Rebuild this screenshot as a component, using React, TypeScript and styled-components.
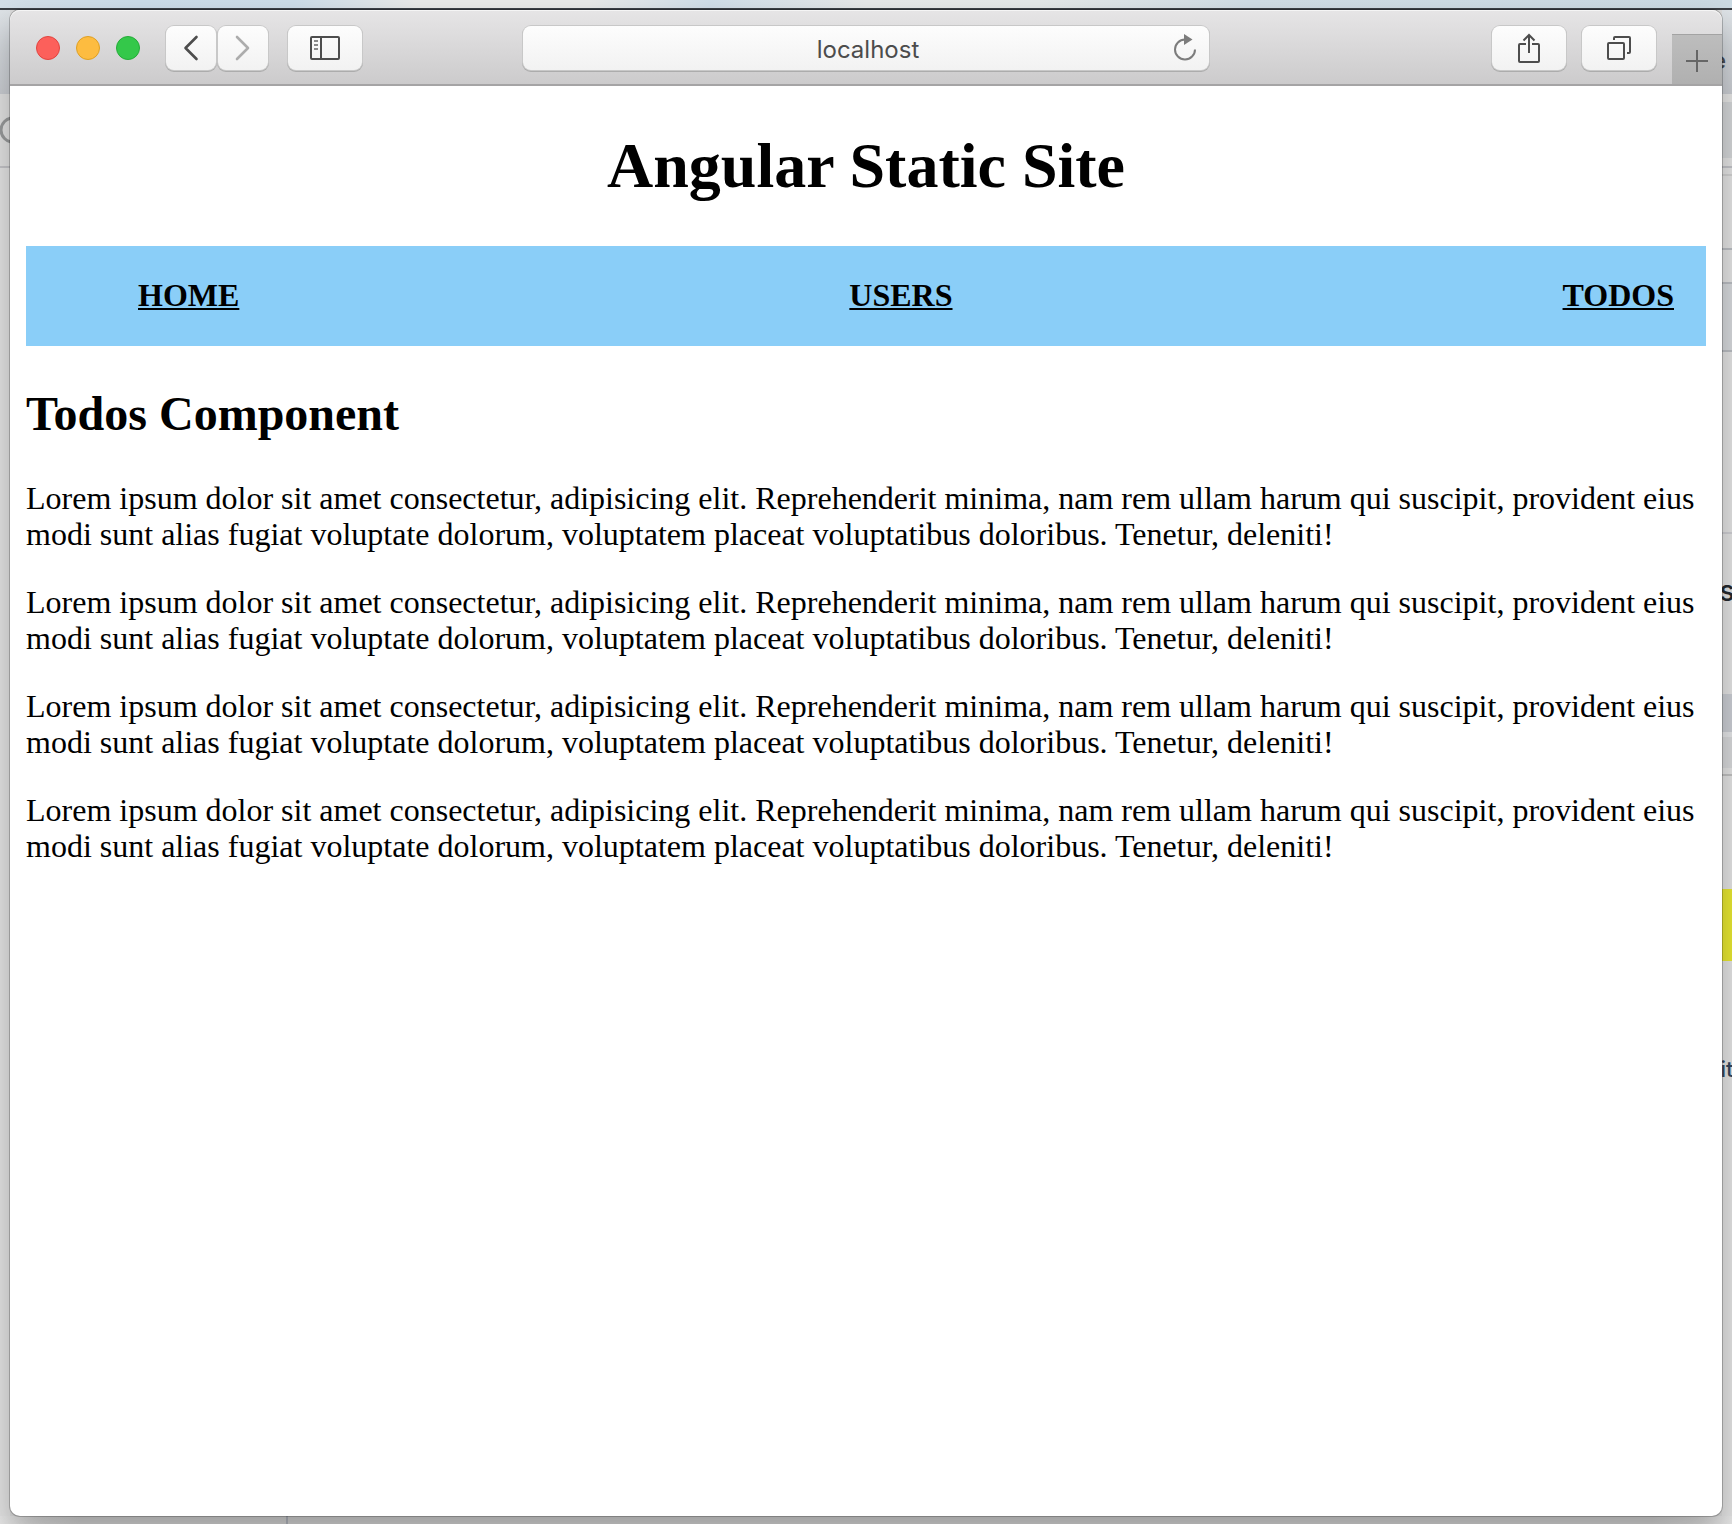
import React from "react";
import styled, { createGlobalStyle } from "styled-components";

const sans = `Inter, Roboto, "Liberation Sans", sans-serif`;
const serif = `"Liberation Serif", "Times New Roman", serif`;

const GlobalStyle = createGlobalStyle`
  * { box-sizing: border-box; }
  body { margin: 0; background: #dadada; font-family: ${serif}; }
`;

const Desktop = styled.div`
  min-height: 100vh;
  display: grid;
  grid-template-columns: 10px minmax(0, 1fr) 10px;
  grid-template-rows: 10px 1fr 8px;
  overflow: hidden;
`;

const MenuBar = styled.div`
  grid-column: 1 / -1;
  height: 10px;
  border-bottom: 2px solid #3a3f45;
  background: linear-gradient(90deg, #d3dfe8 0%, #cbdce8 8%, #cddde8 17%, #e8e9e8 24%, #e8e9e8 34%, #d0dee8 41%, #e6e8e9 50%, #e4e8e8 60%, #d0dde5 72%, #cbdae3 100%);
`;

const Strip = styled.div`
  min-width: 0;
  overflow: hidden;
  display: flex;
  flex-direction: column;
`;

const BottomStrip = styled.div`
  grid-column: 1 / -1;
  padding-left: 286px;
  background: linear-gradient(90deg, #e6e6e6, #d2d2d2 80px, #d2d2d2 calc(100% - 80px), #e6e6e6);
`;

const Divider = styled.div`
  width: 2px;
  height: 8px;
  background: #b0b3bb;
`;

const Band = styled.div<{ $h?: number; $bg?: string; $line?: string; $end?: boolean }>`
  flex: ${(p) => (p.$h ? `0 0 ${p.$h}px` : "1 0 0")};
  background: ${(p) => p.$bg ?? "#e2e2e2"};
  border-bottom: ${(p) => (p.$line ? `2px solid ${p.$line}` : "none")};
  padding: ${(p) => (p.$end ? "18px 6px 0 0" : 0)};
  display: flex;
  align-items: center;
  justify-content: ${(p) => (p.$end ? "flex-end" : "center")};
  overflow: hidden;
`;

const Fragment = styled.span<{ $size: number; $color: string }>`
  flex: none;
  font: 500 ${(p) => p.$size}px/32px ${sans};
  color: ${(p) => p.$color};
`;

const Window = styled.main`
  z-index: 1;
  display: flex;
  flex-direction: column;
  min-width: 0;
  background: #fff;
  border-radius: 10px;
  box-shadow: 0 0 0 1px rgba(0, 0, 0, 0.22), 0 16px 32px rgba(0, 0, 0, 0.26);
`;

const Toolbar = styled.header`
  display: grid;
  grid-template-columns: 1fr minmax(0, 688px) 1fr;
  align-items: start;
  height: 76px;
  border-bottom: 2px solid #a5a4a5;
  border-radius: 10px 10px 0 0;
  background: linear-gradient(#e6e5e6, #cccbcc);
  box-shadow: inset 0 1px #f5f5f5;
`;

const Group = styled.div<{ $end?: boolean }>`
  display: flex;
  align-items: flex-start;
  justify-content: ${(p) => (p.$end ? "flex-end" : "flex-start")};
  padding-left: ${(p) => (p.$end ? 0 : 26)}px;
`;

const Lights = styled.div`
  display: flex;
  gap: 16px;
  margin: 26px 26px 0 0;
`;

const Light = styled.button<{ $fill: string; $edge: string }>`
  width: 24px;
  height: 24px;
  padding: 0;
  border: 1px solid ${(p) => p.$edge};
  border-radius: 50%;
  background: ${(p) => p.$fill};
`;

const ToolButton = styled.button<{ $wide?: boolean; $gap: number }>`
  display: flex;
  align-items: center;
  justify-content: center;
  width: ${(p) => (p.$wide ? 74 : 50)}px;
  height: 44px;
  margin: 16px ${(p) => p.$gap}px 0 0;
  padding: 0;
  border: 0;
  border-radius: 8px;
  background: linear-gradient(#fdfdfd, #f2f2f2);
  box-shadow: 0 0 0 1px #c8c8c8, 0 1px 0 1px #acacac;
`;

const AddressBar = styled.form`
  display: flex;
  align-items: center;
  height: 44px;
  margin: 16px 1px 0;
  padding: 0 12px 0 42px;
  border-radius: 8px;
  background: linear-gradient(#fdfdfd, #f2f2f2);
  box-shadow: 0 0 0 1px #c8c8c8, 0 1px 0 1px #acacac;
`;

const Address = styled.input`
  flex: 1;
  min-width: 0;
  height: 44px;
  padding: 2px 0 0;
  border: 0;
  background: none;
  color: #4c4c4c;
  font: 400 24px/40px ${sans};
  text-align: center;
`;

const Reload = styled.button`
  display: flex;
  padding: 0 0 2px;
  border: 0;
  background: none;
`;

const NewTab = styled.button`
  display: flex;
  align-items: center;
  justify-content: center;
  width: 50px;
  height: 50px;
  margin-top: 24px;
  padding: 2px 0 0;
  border: 0;
  border-top: 1px solid #a3a3a3;
  background: linear-gradient(#bdbdbd, #b0b0b0);
`;

const Page = styled.article`
  padding: 0 16px;
  color: #000;
  font-size: 32px;
  line-height: 36px;
`;

const Title = styled.h1`
  margin: 43px 0;
  font-size: 64px;
  line-height: 74px;
  text-align: center;
`;

const Nav = styled.nav`
  background: #8acef8;
`;

const NavList = styled.ul`
  display: flex;
  justify-content: space-between;
  margin: 0;
  padding: 31px 32px 33px 112px;
  list-style: none;
`;

const NavLink = styled.a`
  color: #000;
  font-weight: 700;
  text-decoration: underline;
  text-decoration-thickness: 2px;
  text-underline-offset: 2px;
  text-decoration-skip-ink: none;
`;

const Heading = styled.h2`
  margin: 41px 0 39px;
  font-size: 48px;
  line-height: 54px;
`;

const Paragraph = styled.p`
  margin: 0 0 32px;
`;

const lorem =
  "Lorem ipsum dolor sit amet consectetur, adipisicing elit. Reprehenderit minima, nam rem ullam harum qui suscipit, provident eius modi sunt alias fugiat voluptate dolorum, voluptatem placeat voluptatibus doloribus. Tenetur, deleniti!";

function Chevron({ back }: { back?: boolean }) {
  return (
    <svg width="16" height="26" viewBox="0 0 16 26" fill="none" stroke={back ? "#4d4d4d" : "#acacac"} strokeWidth="2.6" strokeLinecap="round" strokeLinejoin="round">
      <path d={back ? "M13.500 2 L2.500 13 L13.500 24" : "M2 2 L13 13 L2 24"} />
    </svg>
  );
}

function SidebarIcon() {
  return (
    <svg width="30" height="24" viewBox="0 0 30 24" fill="none" stroke="#4d4d4d" strokeWidth="2">
      <rect x="1" y="1" width="28" height="22" rx="1" />
      <path d="M11 1V23" />
      <path d="M4 5H8M4 9H8M4 13H8" stroke="#8a8a8a" />
    </svg>
  );
}

function ReloadIcon() {
  return (
    <svg width="26" height="30" viewBox="0 0 26 30" fill="none" stroke="#7c7c7c" strokeWidth="2">
      <path d="M14 7.500 A10 10 0 1 0 24 17.500" />
      <path d="M13 2 L21.500 7.500 L13 13 Z" fill="#7c7c7c" stroke="none" />
    </svg>
  );
}

function ShareIcon() {
  return (
    <svg width="24" height="32" viewBox="0 0 24 32" fill="none" stroke="#4d4d4d" strokeWidth="2">
      <path d="M9 12H3Q2 12 2 13V29Q2 30 3 30H21Q22 30 22 29V13Q22 12 21 12H15" />
      <path d="M12 21V3M6.500 8.500L12 3L17.500 8.500" />
    </svg>
  );
}

function TabsIcon() {
  return (
    <svg width="26" height="26" viewBox="0 0 26 26" fill="none" stroke="#4d4d4d" strokeWidth="2">
      <rect x="2" y="8" width="16" height="16" rx="1" />
      <path d="M8 5V3Q8 2 9 2H23Q24 2 24 3V17Q24 18 23 18H21" />
    </svg>
  );
}

function PlusIcon() {
  return (
    <svg width="22" height="22" viewBox="0 0 22 22" stroke="#666" strokeWidth="2">
      <path d="M11 0V22M0 11H22" />
    </svg>
  );
}

export default function App() {
  return (
    <>
      <GlobalStyle />
      <Desktop>
        <MenuBar />
        <Strip>
          <Band $h={84} $bg="linear-gradient(#dde2e6, #c8cbd0)" />
          <Band $h={74} $line="#c2c2c6" $bg="#e0e0e0">
            <svg width="10" height="28" viewBox="0 0 10 28" fill="none" stroke="#97999a" strokeWidth="3">
              <circle cx="13" cy="14" r="12" />
            </svg>
          </Band>
          <Band />
        </Strip>
        <Window>
          <Toolbar>
            <Group>
              <Lights>
                <Light $fill="#fc605b" $edge="#e2443f" aria-label="Close" />
                <Light $fill="#fdbc40" $edge="#dfa023" aria-label="Minimize" />
                <Light $fill="#34c84a" $edge="#24ac38" aria-label="Zoom" />
              </Lights>
              <ToolButton $gap={2} aria-label="Back"><Chevron back /></ToolButton>
              <ToolButton $gap={20} aria-label="Forward"><Chevron /></ToolButton>
              <ToolButton $wide $gap={0} aria-label="Sidebar"><SidebarIcon /></ToolButton>
            </Group>
            <AddressBar onSubmit={(e) => e.preventDefault()}>
              <Address aria-label="Address" defaultValue="localhost" />
              <Reload type="button" aria-label="Reload"><ReloadIcon /></Reload>
            </AddressBar>
            <Group $end>
              <ToolButton $wide $gap={16} aria-label="Share"><ShareIcon /></ToolButton>
              <ToolButton $wide $gap={16} aria-label="Tabs"><TabsIcon /></ToolButton>
              <NewTab aria-label="New tab"><PlusIcon /></NewTab>
            </Group>
          </Toolbar>
          <Page>
            <Title>Angular Static Site</Title>
            <Nav>
              <NavList>
                {["HOME", "USERS", "TODOS"].map((name) => (
                  <li key={name}><NavLink href={`#${name.toLowerCase()}`}>{name}</NavLink></li>
                ))}
              </NavList>
            </Nav>
            <Heading>Todos Component</Heading>
            {[1, 2, 3, 4].map((n) => <Paragraph key={n}>{lorem}</Paragraph>)}
          </Page>
        </Window>
        <Strip>
          <Band $h={84} $end $bg="linear-gradient(#dde2e6, #c8cbd0)">
            <Fragment $size={24} $color="#4a4c4f">e</Fragment>
          </Band>
          <Band $h={8} $bg="#e4e4e3" />
          <Band $h={56} $bg="#d2d4d6" />
          <Band $h={10} $line="#c0c1c6" />
          <Band $h={8} $line="#cfcfcf" />
          <Band $h={74} $line="#b9bcc1" />
          <Band $h={34} $line="#b9bcc1" />
          <Band $h={68} $line="#b9bcc1" $bg="#d5d8db" />
          <Band $h={182} $line="#cdcdd1" />
          <Band $h={114}><Fragment $size={28} $color="#24292e">s</Fragment></Band>
          <Band $h={46} />
          <Band $h={38} $bg="#c9ccd2" />
          <Band $h={5} $bg="#e2e3e5" />
          <Band $h={31} $bg="#d6d7d9" />
          <Band $h={8} $line="#bfbfbf" />
          <Band $h={113} />
          <Band $h={72} $bg="#e6e632" />
          <Band $h={88} />
          <Band $h={40}><Fragment $size={22} $color="#34465e">it</Fragment></Band>
          <Band />
        </Strip>
        <BottomStrip>
          <Divider />
        </BottomStrip>
      </Desktop>
    </>
  );
}
